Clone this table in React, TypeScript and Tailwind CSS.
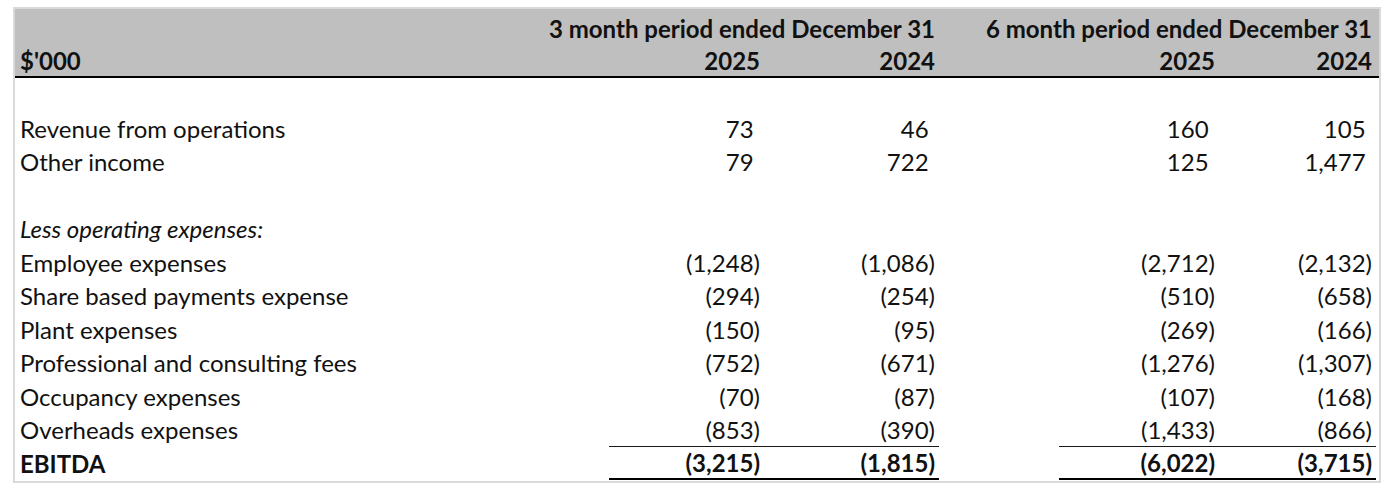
import React from "react";

type Line = {
  label: string;
  values?: [number, number, number, number];
  italic?: boolean;
  bold?: boolean;
  rule?: "single" | "double";
};

const lines: Line[] = [
  { label: "" },
  { label: "Revenue from operations", values: [73, 46, 160, 105] },
  { label: "Other income", values: [79, 722, 125, 1477] },
  { label: "" },
  { label: "Less operating expenses:", italic: true },
  { label: "Employee expenses", values: [-1248, -1086, -2712, -2132] },
  { label: "Share based payments expense", values: [-294, -254, -510, -658] },
  { label: "Plant expenses", values: [-150, -95, -269, -166] },
  { label: "Professional and consulting fees", values: [-752, -671, -1276, -1307] },
  { label: "Occupancy expenses", values: [-70, -87, -107, -168] },
  { label: "Overheads expenses", values: [-853, -390, -1433, -866], rule: "single" },
  { label: "EBITDA", values: [-3215, -1815, -6022, -3715], bold: true, rule: "double" },
];

const colW = ["w-[155px]", "w-[175px]", "w-[160px]", "w-[157px]"];

function Amount({ n }: { n: number }) {
  const s = Math.abs(n).toLocaleString("en-US");
  if (n < 0) return <span>({s})</span>;
  return (
    <span>
      {s}
      <span className="invisible">)</span>
    </span>
  );
}

function ValueCell({ n, i, rule }: { n: number; i: number; rule?: Line["rule"] }) {
  return (
    <div
      className={[
        "flex h-full shrink-0 items-center justify-end pr-[4px] pt-px",
        colW[i],
        rule === "single" ? "border-b-[1.5px] border-[#1a1a1a]" : "",
        rule === "double" ? "border-b-2 border-black" : "",
      ].join(" ")}
    >
      <Amount n={n} />
    </div>
  );
}

function Row({ line }: { line: Line }) {
  const v = line.values;
  return (
    <div
      className={[
        "flex h-[33.5px] items-stretch",
        line.bold ? "font-bold" : "",
        line.italic ? "italic" : "",
      ].join(" ")}
    >
      <div className="flex w-[594px] shrink-0 items-center pl-[5px] pt-px whitespace-nowrap">
        {line.label}
      </div>
      {v ? (
        <>
          <ValueCell n={v[0]} i={0} rule={line.rule} />
          <ValueCell n={v[1]} i={1} rule={line.rule} />
          <div className="w-[120px] shrink-0" />
          <ValueCell n={v[2]} i={2} rule={line.rule} />
          <ValueCell n={v[3]} i={3} rule={line.rule} />
        </>
      ) : null}
    </div>
  );
}

export default function App() {
  return (
    <div
      className="h-[498px] w-[1396px] bg-white pl-[13px] pt-[7px] text-[24px] leading-none text-[#111]"
      style={{ fontFamily: "Lato, 'Open Sans', sans-serif" }}
    >
      <div className="w-[1368px] border-2 border-[#d9d9d9]">
        <div className="border-b-2 border-black bg-[#bfbfbf] font-bold">
          <div className="flex h-[35px] items-center pt-[5px]">
            <div className="w-[594px] shrink-0" />
            <div className="flex w-[330px] shrink-0 justify-end whitespace-nowrap pr-[4px]">
              3 month period ended December 31
            </div>
            <div className="w-[120px] shrink-0" />
            <div className="flex w-[317px] shrink-0 justify-end whitespace-nowrap pr-[4px]">
              6 month period ended December 31
            </div>
          </div>
          <div className="flex h-[32px] items-center pt-[2px]">
            <div className="w-[594px] shrink-0 pl-[5px]">$'000</div>
            <div className="flex w-[155px] shrink-0 justify-end pr-[4px]">2025</div>
            <div className="flex w-[175px] shrink-0 justify-end pr-[4px]">2024</div>
            <div className="w-[120px] shrink-0" />
            <div className="flex w-[160px] shrink-0 justify-end pr-[4px]">2025</div>
            <div className="flex w-[157px] shrink-0 justify-end pr-[4px]">2024</div>
          </div>
        </div>
        <div className="pb-px">
          {lines.map((line, idx) => (
            <Row key={idx} line={line} />
          ))}
        </div>
      </div>
    </div>
  );
}
